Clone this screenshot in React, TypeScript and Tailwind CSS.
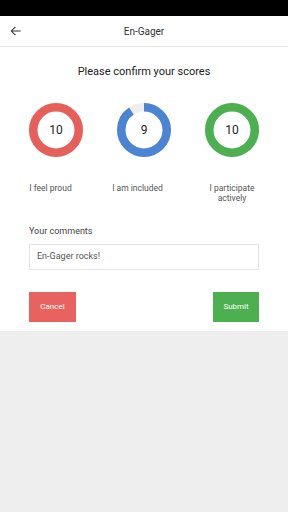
import React from "react";

function Ring({ value, color }: { value: number; color: string }) {
  const r = 22.75;
  const c = 2 * Math.PI * r;
  const frac = value / 10;
  return (
    <div className="relative w-[54px] h-[54px]">
      <svg width="54" height="54" viewBox="0 0 54 54" className="absolute inset-0">
        <circle cx="27" cy="27" r={r} fill="none" stroke="#eeeeee" strokeWidth="8.5" />
        <circle
          cx="27"
          cy="27"
          r={r}
          fill="none"
          stroke={color}
          strokeWidth="8.5"
          strokeDasharray={`${c * frac} ${c}`}
          transform="rotate(-90 27 27)"
        />
      </svg>
      <div className="absolute inset-0 flex items-center justify-center text-[12px] text-[#222]">{value}</div>
    </div>
  );
}

export default function App() {
  return (
    <div className="w-[288px] h-[512px] flex flex-col bg-[#eeeeee]" style={{ fontFamily: "Roboto, 'Liberation Sans', sans-serif" }}>
      <div className="h-[16px] bg-black" />
      <div className="bg-white">
        <div className="h-[31px] flex items-center border-b border-[#e3e3e3] relative">
          <svg width="14" height="14" viewBox="0 0 24 24" className="absolute left-[9px] top-[8px]">
            <path d="M20 12H4M11 5l-7 7 7 7" fill="none" stroke="#333" strokeWidth="1.8" />
          </svg>
          <div className="flex-1 text-center text-[10px] text-[#333]">En-Gager</div>
        </div>
        <div className="pt-[17px] text-center text-[11px] text-[#222] leading-[16px]">Please confirm your scores</div>
        <div className="flex justify-center gap-[34px] mt-[23px]">
          <div className="flex flex-col items-center w-[54px]">
            <Ring value={10} color="#e65f5b" />
          </div>
          <div className="flex flex-col items-center w-[54px]">
            <Ring value={9} color="#4a84d2" />
          </div>
          <div className="flex flex-col items-center w-[54px]">
            <Ring value={10} color="#4caf50" />
          </div>
        </div>
        <div className="flex justify-center gap-[34px] mt-[26px] text-[8.5px] leading-[10px] text-[#555]">
          <div className="w-[54px] flex justify-center"><span className="whitespace-nowrap mr-[11px]">I feel proud</span></div>
          <div className="w-[54px] flex justify-center"><span className="whitespace-nowrap mr-[13px]">I am included</span></div>
          <div className="w-[54px] text-center">I participate<br />actively</div>
        </div>
        <div className="px-[29px] mt-[22px]">
          <div className="text-[9px] leading-[12px] text-[#444]">Your comments</div>
          <div className="mt-[7px] h-[26px] border border-[#e6e6e6] flex items-center px-[7px] text-[9px] text-[#555]">En-Gager rocks!</div>
          <div className="flex justify-between mt-[22px]">
            <div className="w-[47px] h-[30px] bg-[#e8635f] text-white text-[8px] flex items-center justify-center">Cancel</div>
            <div className="w-[46px] h-[30px] bg-[#4caf50] text-white text-[8px] flex items-center justify-center">Submit</div>
          </div>
        </div>
        <div className="h-[9px]" />
      </div>
    </div>
  );
}
